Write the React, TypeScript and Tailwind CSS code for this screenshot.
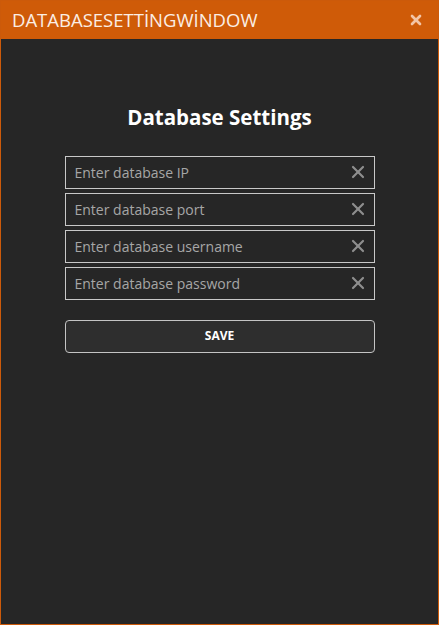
import { X } from "lucide-react";

const fields = [
  "Enter database IP",
  "Enter database port",
  "Enter database username",
  "Enter database password",
];

export default function App() {
  return (
    <div
      className="w-[439px] h-[625px] flex flex-col border border-[#cc5a0a] bg-[#262626]"
      style={{ fontFamily: '"Open Sans", "Noto Sans", sans-serif' }}
    >
      <div className="h-[38px] shrink-0 bg-[#cf5b08] flex items-center justify-between pl-[11px] pr-[14px]">
        <span className="text-[18.5px] text-[#fbeee4]">DATABASESETTİNGWİNDOW</span>
        <X size={16} strokeWidth={4} className="text-[#f3c5a6]" />
      </div>

      <div className="flex flex-col items-center pt-[68px]">
        <h1 className="text-[20.5px] font-bold text-white leading-none mb-[28px]">Database Settings</h1>

        <div className="w-[310px] flex flex-col gap-[4px]">
          {fields.map((f) => (
            <div
              key={f}
              className="h-[33px] border border-[#c8c8c8] flex items-center justify-between pl-[9px] pr-[6px]"
            >
              <span className="text-[14px] text-[#a6a6a6]">{f}</span>
              <X size={20} strokeWidth={2.6} className="text-[#8e8e8e]" />
            </div>
          ))}
        </div>

        <button className="mt-[20px] w-[310px] h-[33px] rounded-[4px] border border-[#c4c4c4] bg-[#2e2e2e] text-[12px] font-bold text-white">
          SAVE
        </button>
      </div>
    </div>
  );
}
